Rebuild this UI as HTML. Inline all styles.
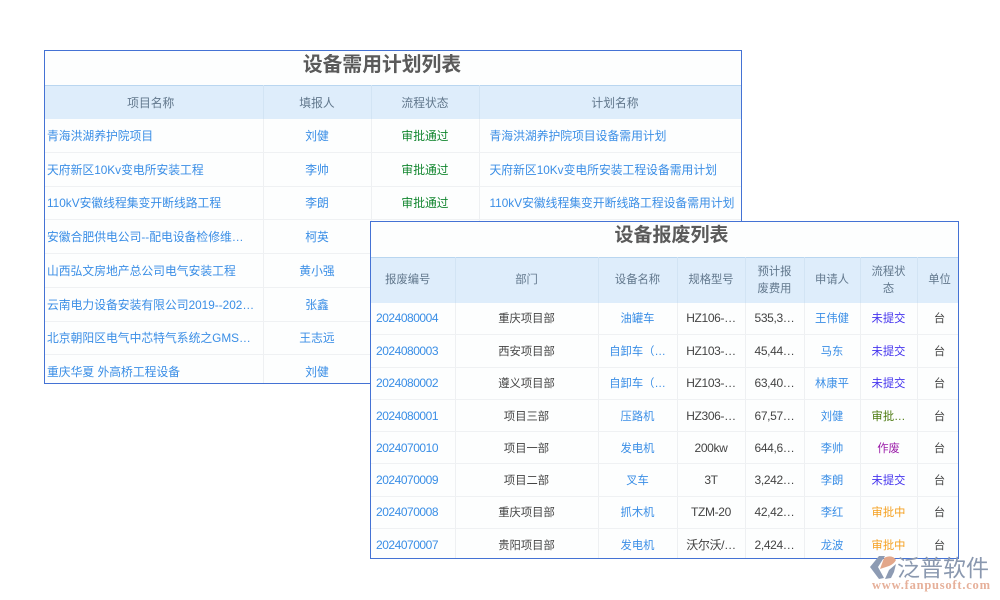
<!DOCTYPE html>
<html><head><meta charset="utf-8">
<style>
html,body{margin:0;padding:0;background:#fff;width:1000px;height:600px;overflow:hidden}
body{position:relative;font-family:"Liberation Sans","Noto Sans CJK SC",sans-serif;font-size:12px;color:#555}
.box{position:absolute;border:1px solid #4472d4;background:#fdfefe;overflow:hidden;box-sizing:border-box}
.t{position:absolute;left:0;right:0;text-align:center;font-weight:700;color:#5a5a5a;line-height:28px;filter:blur(.3px)}
table{position:absolute;left:0;border-collapse:collapse;table-layout:fixed;filter:blur(.25px)}
th,td{padding:0;font-weight:400;text-align:center;white-space:nowrap;overflow:hidden;border-right:1px solid #eef0f2;border-bottom:1px solid #eff1f3;box-sizing:border-box}
th{background:#deedfb;color:#61778c;border-right-color:#d2e4f4;border-bottom:0;white-space:normal;line-height:17px}
thead tr{border-top:1px solid #b9d6f0}
.l{text-align:left}
.b{color:#3a8ee6}
.d{color:#444}
.g{color:#12862f}
.p{color:#4433ee}
.o{color:#f5a020}
.v{color:#9a1aa8}
.y{color:#4c7a10}
.n{font-size:12px;letter-spacing:-.35px}
#a{font-size:11.8px}
#b{font-size:11.3px}
#a td{height:33.75px}
#a td.l{padding-left:2px}
#a th{padding-top:2px}
#b th{padding-top:1px}
#b td{height:32.3px}
#b td.l{padding-left:5px;font-size:12px;letter-spacing:-.47px}
</style></head><body>

<div class="box" style="left:44px;top:50px;width:698px;height:334px">
<div class="t" style="top:0;left:-22px;font-size:19.8px">设备需用计划列表</div>
<table id="a" style="top:34px;width:696px">
<colgroup><col style="width:218px"><col style="width:108px"><col style="width:108px"><col style="width:262px"></colgroup>
<thead><tr style="height:33px"><th style="padding-right:6px">项目名称</th><th>填报人</th><th>流程状态</th><th style="padding-left:10px">计划名称</th></tr></thead>
<tbody>
<tr><td class="l b">青海洪湖养护院项目</td><td class="b">刘健</td><td class="g">审批通过</td><td class="l b" style="padding-left:10px">青海洪湖养护院项目设备需用计划</td></tr>
<tr><td class="l b">天府新区10Kv变电所安装工程</td><td class="b">李帅</td><td class="g">审批通过</td><td class="l b" style="padding-left:10px">天府新区10Kv变电所安装工程设备需用计划</td></tr>
<tr><td class="l b">110kV安徽线程集变开断线路工程</td><td class="b">李朗</td><td class="g">审批通过</td><td class="l b" style="padding-left:10px">110kV安徽线程集变开断线路工程设备需用计划</td></tr>
<tr><td class="l b">安徽合肥供电公司--配电设备检修维…</td><td class="b">柯英</td><td class="g">审批通过</td><td></td></tr>
<tr><td class="l b">山西弘文房地产总公司电气安装工程</td><td class="b">黄小强</td><td class="g">审批通过</td><td></td></tr>
<tr><td class="l b">云南电力设备安装有限公司2019--202…</td><td class="b">张鑫</td><td class="g">审批通过</td><td></td></tr>
<tr><td class="l b">北京朝阳区电气中芯特气系统之GMS…</td><td class="b">王志远</td><td class="g">审批通过</td><td></td></tr>
<tr><td class="l b">重庆华夏 外高桥工程设备</td><td class="b">刘健</td><td class="g">审批通过</td><td></td></tr>
</tbody></table>
</div>

<div class="box" style="left:370px;top:221px;width:589px;height:338px">
<div class="t" style="top:0;left:14px;font-size:19px">设备报废列表</div>
<table id="b" style="top:35px;width:587px">
<colgroup><col style="width:84px"><col style="width:143px"><col style="width:79px"><col style="width:68px"><col style="width:59px"><col style="width:56px"><col style="width:57px"><col style="width:41px"></colgroup>
<thead><tr style="height:45px"><th style="padding-right:10px">报废编号</th><th>部门</th><th>设备名称</th><th>规格型号</th><th>预计报<br>废费用</th><th>申请人</th><th>流程状<br>态</th><th style="padding-left:4px">单位</th></tr></thead>
<tbody>
<tr><td class="l b">2024080004</td><td class="d">重庆项目部</td><td class="b">油罐车</td><td class="d n">HZ106-…</td><td class="d n">535,3…</td><td class="b">王伟健</td><td class="p">未提交</td><td class="d" style="padding-left:4px">台</td></tr>
<tr><td class="l b">2024080003</td><td class="d">西安项目部</td><td class="b">自卸车（…</td><td class="d n">HZ103-…</td><td class="d n">45,44…</td><td class="b">马东</td><td class="p">未提交</td><td class="d" style="padding-left:4px">台</td></tr>
<tr><td class="l b">2024080002</td><td class="d">遵义项目部</td><td class="b">自卸车（…</td><td class="d n">HZ103-…</td><td class="d n">63,40…</td><td class="b">林康平</td><td class="p">未提交</td><td class="d" style="padding-left:4px">台</td></tr>
<tr><td class="l b">2024080001</td><td class="d">项目三部</td><td class="b">压路机</td><td class="d n">HZ306-…</td><td class="d n">67,57…</td><td class="b">刘健</td><td class="y">审批…</td><td class="d" style="padding-left:4px">台</td></tr>
<tr><td class="l b">2024070010</td><td class="d">项目一部</td><td class="b">发电机</td><td class="d n">200kw</td><td class="d n">644,6…</td><td class="b">李帅</td><td class="v">作废</td><td class="d" style="padding-left:4px">台</td></tr>
<tr><td class="l b">2024070009</td><td class="d">项目二部</td><td class="b">叉车</td><td class="d n">3T</td><td class="d n">3,242…</td><td class="b">李朗</td><td class="p">未提交</td><td class="d" style="padding-left:4px">台</td></tr>
<tr><td class="l b">2024070008</td><td class="d">重庆项目部</td><td class="b">抓木机</td><td class="d n">TZM-20</td><td class="d n">42,42…</td><td class="b">李红</td><td class="o">审批中</td><td class="d" style="padding-left:4px">台</td></tr>
<tr><td class="l b">2024070007</td><td class="d">贵阳项目部</td><td class="b">发电机</td><td class="d n">沃尔沃/…</td><td class="d n">2,424…</td><td class="b">龙波</td><td class="o">审批中</td><td class="d" style="padding-left:4px">台</td></tr>
</tbody></table>
</div>

<svg style="position:absolute;left:865px;top:550px" width="135" height="50" viewBox="0 0 135 50">
<path d="M5 17 L14 6 L20 6 L13 17 L19 28 L14 29 Z" fill="#8d9bb3"/>
<path d="M19 8 Q27 4 31 10 Q29 14 24 16 L15 19 Z" fill="#e3a78a"/>
<path d="M20 29 L24 20 L31 14 L29 22 L26 28 Z" fill="#8d9bb3"/>
<text x="32" y="26" font-family="'Noto Sans CJK SC',sans-serif" font-size="23" font-weight="400" fill="#8a98af" textLength="92">泛普软件</text>
<text x="7" y="39" font-family="'Liberation Serif',serif" font-size="12.5" font-weight="700" fill="#e6b09a" textLength="118">www.fanpusoft.com</text>
</svg>
</body></html>
